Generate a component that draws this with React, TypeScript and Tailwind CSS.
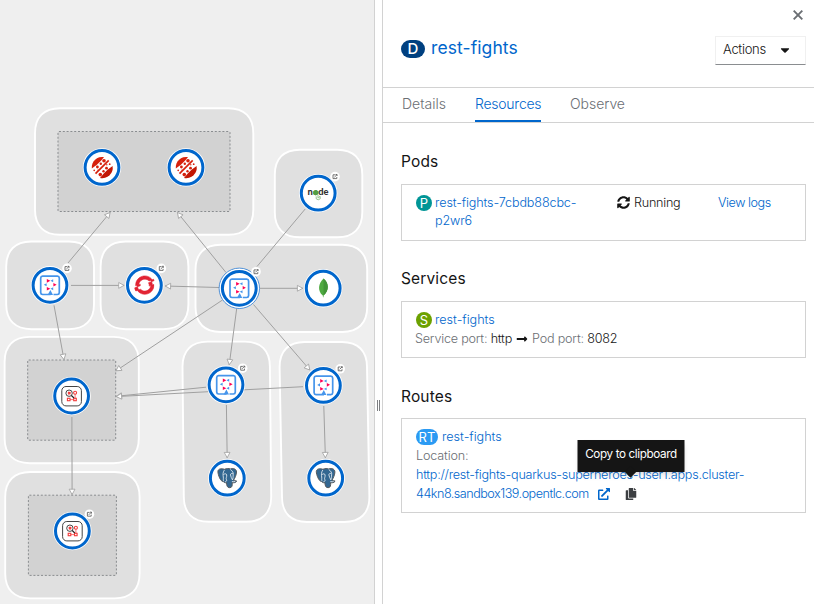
import React from "react";
import { FaSyncAlt, FaExternalLinkAlt, FaCopy, FaCaretDown, FaLongArrowAltRight } from "react-icons/fa";
import { SiRedhatopenshift } from "react-icons/si";

const LINE = "#a0a0a0";

type Pt = { x: number; y: number };

function Group({ x1, y1, x2, y2, skew = 0 }: { x1: number; y1: number; x2: number; y2: number; skew?: number }) {
  const r = 25;
  const d = `M${x1 + r} ${y1}H${x2 - r}C${x2 - 9} ${y1} ${x2} ${y1 + 9} ${x2} ${y1 + r}L${x2 + skew} ${y2 - r}C${x2 + skew} ${y2 - 9} ${x2 - 9 + skew} ${y2} ${x2 - r + skew} ${y2}H${x1 + r + skew}C${x1 + 9 + skew} ${y2} ${x1 + skew} ${y2 - 9} ${x1 + skew} ${y2 - r}L${x1} ${y1 + r}C${x1} ${y1 + 9} ${x1 + 9} ${y1} ${x1 + r} ${y1}Z`;
  return <path d={d} fill="#e0e0e0" stroke="#fff" strokeWidth="1.9" />;
}

function Inner({ x, y, w, h }: { x: number; y: number; w: number; h: number }) {
  return <rect x={x} y={y} width={w} height={h} rx="1" fill="#d2d2d2" stroke="#8a8d90" strokeWidth="1" strokeDasharray="2 1.8" />;
}

function Edge({ x1, y1, x2, y2, arrow = true }: { x1: number; y1: number; x2: number; y2: number; arrow?: boolean }) {
  const a = (Math.atan2(y2 - y1, x2 - x1) * 180) / Math.PI;
  return (
    <g stroke={LINE} strokeWidth="1">
      <line x1={x1} y1={y1} x2={x2} y2={y2} />
      {arrow && <path d="M-5.6 -2.9L-0.3 0L-5.6 2.9Z" fill="#fff" strokeWidth="0.8" transform={`translate(${x2} ${y2}) rotate(${a})`} />}
    </g>
  );
}

function Node({ x, y, selected, children }: Pt & { selected?: boolean; children: React.ReactNode }) {
  return (
    <g transform={`translate(${x} ${y})`}>
      {selected && <circle r="20.2" fill="#fff" stroke="#3d86d4" strokeWidth="0.9" />}
      <circle r="19.2" fill="#fff" />
      <circle r="16.9" fill="#fff" stroke="#06c" strokeWidth="3" />
      {children}
    </g>
  );
}

function Decorator({ x, y }: Pt) {
  return (
    <g transform={`translate(${x} ${y})`}>
      <circle r="4.8" fill="#fff" />
      <path d="M0.2 -1.8H-2V2H1.8V0.4M-0.6 0.6L2 -2M0.6 -2.1H2.1V-0.6" fill="none" stroke="#555" strokeWidth="0.8" />
    </g>
  );
}

function Quarkus() {
  return (
    <g>
      <path d="M3.5 9.2H7.4A2 2 0 0 0 9.3 7.3V-7.3A2 2 0 0 0 7.4 -9.2H-7.4A2 2 0 0 0 -9.3 -7.3V7.3A2 2 0 0 0 -7.4 9.2H0.6" fill="none" stroke="#4695eb" strokeWidth="1.7" />
      <path d="M0.4 4.7L3 9.6H-2.4Z" fill="#4695eb" />
      <g fill="#f05">
        <path d="M-3.2 -6.3L0.3 -4.5L-3.2 -2.6Z" />
        <path d="M3.4 -2.4L6.6 -0.6L3.4 1.3Z" />
        <path d="M-3.2 1.7L0.3 3.5L-3.2 5.2Z" />
      </g>
      <g fill="#4695eb">
        <path d="M3.2 -6L0.5 -4.5L3.2 -3Z" />
        <path d="M-3.4 -2.1L-6.2 -0.5L-3.4 1Z" />
        <path d="M3.2 2L0.5 3.5L3.2 4.9Z" />
      </g>
    </g>
  );
}

function Strimzi() {
  return (
    <g>
      <path d="M-10.2 1A10.4 10.4 0 0 1 2 -10.3L-0.3 -7.4L-5.1 -2.6Z" fill="#d6200c" />
      <path d="M10.6 -1.5A10.4 10.4 0 0 1 -2 10.5L1.5 6.4L5.8 2.2Z" fill="#c21704" />
      <path d="M-6.5 6.2L6.7 -7" stroke="#d6200c" strokeWidth="1.7" />
      <g fill="#d6200c">
        <circle cx="2" cy="-6.7" r="1.8" />
        <circle cx="-1.2" cy="-3.7" r="1.2" />
        <circle cx="-4.6" cy="-0.4" r="1.4" />
        <circle cx="-7.8" cy="3" r="0.8" />
        <circle cx="-4" cy="2.6" r="0.6" />
        <circle cx="-1.7" cy="7.2" r="1.8" />
        <circle cx="1.5" cy="3.8" r="1.2" />
        <circle cx="4.5" cy="0.8" r="1.4" />
        <circle cx="4.8" cy="-2.7" r="0.7" />
        <circle cx="7.7" cy="-3.2" r="0.9" />
      </g>
    </g>
  );
}

function NodeJs() {
  return (
    <g>
      <text x="-10.6" y="2" fontFamily="Lato, sans-serif" fontWeight="900" fontSize="9.2" fill="#333" textLength="21" lengthAdjust="spacingAndGlyphs">
        n<tspan fill="#539e43">o</tspan>de
      </text>
      <path d="M-2.5 -3.2L0 -1.8V1L-2.5 2.4L-5 1V-1.8Z" fill="#539e43" />
      <path d="M-0.2 1.8V4.8M-2 3.2V5.6L0 6.6L2 5.6V3.2M1.7 2.9L0.1 5.1" fill="none" stroke="#7db673" strokeWidth="0.8" />
    </g>
  );
}

function Leaf() {
  return (
    <g>
      <path d="M0.3 -9.8C5.8 -5.2 6.3 2 0.4 7.2L0.3 9H-0.2L-0.4 7.2C-6 2.5 -4.8 -4.8 0.3 -9.8Z" fill="#4faa41" />
      <path d="M0.3 -9.8C5.8 -5.2 6.3 2 0.4 7.2Z" fill="#429538" />
    </g>
  );
}

function Elephant() {
  return (
    <g>
      <path
        d="M-9.4 -6.6C-9.4 -9.6 -5.4 -10 -2.8 -8.9C-0.5 -9.9 1.4 -9.8 3 -9.2C5.6 -10.4 9.2 -9.4 9.2 -6.2C9.2 -3.4 7.4 0.3 6.2 2.1C7.4 2.7 8.6 2.2 9.4 3C8.4 4.6 6 4.8 4.9 4.4C5.1 7 5 9.5 2.4 9.5C-0.1 9.5 -0.6 7.4 -0.8 4.5C-2 4.7 -3.4 4.4 -4.1 3.3C-6.8 3.5 -9.3 -3.4 -9.4 -6.6Z"
        fill="#336791"
        stroke="#55595c"
        strokeWidth="1"
      />
      <path
        d="M-2.9 -8.2C-4.6 -5.8 -4.4 -3.4 -4 -1.2C-3.7 0.8 -4.4 1.6 -3.6 2.9M-3.8 -3.6C-2.4 -4.8 -0.8 -4.6 -0.6 -3.2C-0.3 -1.2 -1.8 0.2 -0.8 1.6C-0.3 2.4 -1 3.6 -2.4 3.6M3 -8.7C5.2 -7.2 6.4 -5.4 5.9 -3.4C5.6 -1.4 6.2 0 4.9 1.7M5.6 -4.4C4.4 -5.2 3 -4.6 3.2 -3.2C3.4 -1.4 4.6 0.4 5.2 1.6M4.6 3.4C6 3.6 7.2 3.5 8 3.2"
        fill="none"
        stroke="#fff"
        strokeWidth="0.75"
      />
    </g>
  );
}

function Apicurio() {
  return (
    <g>
      <rect x="-9.8" y="-9.5" width="19.6" height="19.4" rx="4.2" fill="#fff" stroke="#444" strokeWidth="1" />
      <g fill="none" stroke="#f33b3b" strokeWidth="1.1">
        <rect x="-4.2" y="2.3" width="2.6" height="2.4" />
        <rect x="2.1" y="2.3" width="2.6" height="2.4" />
        <circle cx="3.5" cy="-3.3" r="1.5" />
        <path d="M-1.6 3.6H2.1M3.5 -1.8V2.2" strokeWidth="0.7" />
        <path d="M-3.5 -4L-1.2 -1.7M-1.2 -4L-3.5 -1.7" strokeWidth="1.4" />
      </g>
      <circle cx="-2.5" cy="-2.8" r="3.2" fill="none" stroke="#333" strokeWidth="0.9" />
      <path d="M-0.2 -0.5L2.4 2" stroke="#222" strokeWidth="1.1" />
    </g>
  );
}

function OpenShift() {
  return (
    <g>
      <SiRedhatopenshift x={-10} y={-10.2} size={20} color="#e22434" strokeWidth={0.7} />
    </g>
  );
}

function Topology() {
  return (
    <svg width="374" height="604" viewBox="0 0 374 604" className="block">
      <Group x1={35} y1={108.2} x2={253.3} y2={234.8} />
      <Group x1={274.8} y1={149.7} x2={362.3} y2={237.3} />
      <Group x1={6.2} y1={241.5} x2={94} y2={329.2} />
      <Group x1={100.6} y1={241.5} x2={188.4} y2={329.2} />
      <Group x1={195.5} y1={244.8} x2={367.2} y2={332} />
      <Group x1={4.6} y1={336.9} x2={138.8} y2={463.2} />
      <Group x1={5.2} y1={472} x2={139.6} y2={598.4} />
      <Group x1={182.5} y1={341.6} x2={269.9} y2={521.8} skew={1.3} />
      <Group x1={279.6} y1={342} x2={367} y2={522} skew={2.4} />
      <Inner x={58} y={131.5} w={172} h={80} />
      <Inner x={27.7} y={360} w={88} h={80.2} />
      <Inner x={28.4} y={495.2} w={88} h={80.2} />

      <Edge x1={68} y1={263} x2={110.3} y2={212.3} />
      <Edge x1={226} y1={272.5} x2={177.3} y2={212.3} />
      <Edge x1={257} y1={266.5} x2={305.2} y2={209} arrow={false} />
      <Edge x1={260} y1={288.3} x2={303} y2={288.3} />
      <Edge x1={219} y1={287.5} x2={165} y2={286} />
      <Edge x1={71} y1={285.4} x2={124.3} y2={285.4} />
      <Edge x1={54} y1={305.3} x2={64} y2={359.8} />
      <Edge x1={222.5} y1={300} x2={115.7} y2={371} />
      <Edge x1={236.7} y1={308.5} x2={229.2} y2={365} />
      <Edge x1={253.5} y1={304.5} x2={310} y2={370.2} />
      <Edge x1={206} y1={387.2} x2={116} y2={396.3} />
      <Edge x1={303} y1={386.7} x2={116} y2={396.6} />
      <Edge x1={226.4} y1={405} x2={227.2} y2={458} />
      <Edge x1={323.8} y1={406} x2={325.4} y2={458} />
      <Edge x1={71.9} y1={417} x2={72.1} y2={494.8} />

      <Node x={102} y={167.4}><Strimzi /></Node>
      <Node x={186} y={167.4}><Strimzi /></Node>
      <Node x={318.2} y={193.2}><NodeJs /></Node>
      <Node x={239.3} y={288.3} selected><Quarkus /></Node>
      <Node x={323.2} y={288.2}><Leaf /></Node>
      <Node x={50} y={285.3}><Quarkus /></Node>
      <Node x={144.4} y={285.3}><OpenShift /></Node>
      <Node x={71.6} y={396}><Apicurio /></Node>
      <Node x={72.4} y={531}><Apicurio /></Node>
      <Node x={226} y={384.8}><Quarkus /></Node>
      <Node x={323.4} y={385.4}><Quarkus /></Node>
      <Node x={227.3} y={478.2}><Elephant /></Node>
      <Node x={325.7} y={478.2}><Elephant /></Node>

      <Decorator x={335} y={176.6} />
      <Decorator x={256} y={271.7} />
      <Decorator x={67} y={268.4} />
      <Decorator x={161.3} y={268.4} />
      <Decorator x={242.7} y={368.2} />
      <Decorator x={340.2} y={368.8} />
      <Decorator x={89.4} y={514.2} />
    </svg>
  );
}

function Heading({ children }: { children: React.ReactNode }) {
  return <h2 className="h-5 text-[15.5px] leading-5 tracking-[0.15px] text-[#151515]">{children}</h2>;
}

function Badge({ className, children }: { className: string; children: React.ReactNode }) {
  return <span className={`flex h-4 shrink-0 items-center justify-center rounded-full text-[13px] leading-4 font-normal text-white ${className}`}>{children}</span>;
}

export default function App() {
  return (
    <div className="flex h-[604px] w-[814px] overflow-hidden bg-white font-['Inter',sans-serif] font-light text-[#151515]">
      <div className="w-[374px] shrink-0 bg-[#efefef]">
        <Topology />
      </div>
      <div className="flex w-[9px] shrink-0 items-center justify-center gap-px border-x border-[#d2d2d2] pt-[206px]">
        <span className="h-[11px] w-px bg-[#7d7f82]" />
        <span className="h-[11px] w-px bg-[#7d7f82]" />
      </div>

      <aside className="flex min-w-0 flex-1 flex-col">
        <header className="flex h-[88px] flex-col border-b border-[#d2d2d2]">
          <div className="flex h-[30px] justify-end pt-[10px] pr-[11px]">
            <svg width="10" height="10" viewBox="0 0 10 10">
              <path d="M0.7 0.7L9.3 9.3M9.3 0.7L0.7 9.3" stroke="#6a6e73" strokeWidth="1.9" />
            </svg>
          </div>
          <div className="flex items-start justify-between pr-2 pl-[18px]">
            <div className="flex pt-[7px]">
              <span className="mt-[3px] flex h-[18px] w-6 items-center justify-center rounded-full bg-[#004080] text-[15px] font-medium text-white">D</span>
              <h1 className="ml-1.5 text-[17.5px] leading-[22px] font-normal tracking-[0.1px] text-[#06c]">rest-fights</h1>
            </div>
            <button className="mt-1.5 flex h-[29px] w-[91px] items-center justify-between border border-[#f0f0f0] border-b-[#8a8d90] pr-[13px] pb-0.5 pl-[7px] text-[13px] font-light">
              <span className="tracking-[-0.3px]">Actions</span>
              <FaCaretDown size={14} />
            </button>
          </div>
        </header>

        <nav className="flex h-[35px] gap-[29px] border-b border-[#d2d2d2] pl-[19px] text-[14px] leading-[32px] text-[#6a6e73]">
          <span className="w-11 whitespace-nowrap">Details</span>
          <span className="w-[66px] border-b-2 border-[#06c] tracking-[-0.25px] whitespace-nowrap text-[#06c]">Resources</span>
          <span className="tracking-[-0.05px] whitespace-nowrap">Observe</span>
        </nav>

        <main className="flex flex-col pr-2 pl-[18px] text-[12.6px] leading-[18.9px]">
          <div className="pt-[29px] pb-3 font-normal"><Heading>Pods</Heading></div>
          <section className="flex h-[57px] border border-[#d2d2d2] pt-[9px] pl-[14px] leading-[18px]">
            <Badge className="mt-px w-4 bg-[#009596]">P</Badge>
            <a className="ml-[3px] w-[182px] tracking-[-0.12px] text-[#06c]">rest-fights-7cbdb88cbc-<br />p2wr6</a>
            <div className="flex w-[101px] tracking-[-0.25px]">
              <FaSyncAlt size={13} className="mt-[2px] mr-1" />
              <span>Running</span>
            </div>
            <a className="tracking-[-0.45px] text-[#06c]">View logs</a>
          </section>

          <div className="pt-7 pb-3 font-normal"><Heading>Services</Heading></div>
          <section className="flex h-[57px] flex-col border border-[#d2d2d2] pt-[9px] pl-[14px]">
            <div className="flex">
              <Badge className="mt-px mr-[3px] w-4 bg-[#6ca100]">S</Badge>
              <a className="text-[#06c]">rest-fights</a>
            </div>
            <div className="-ml-px flex items-center gap-1 tracking-[-0.2px] text-[#6a6e73]">
              <span>Service port: <span className="text-[#151515]">http</span></span>
              <FaLongArrowAltRight size={12} color="#151515" />
              <span>Pod port: <span className="text-[#151515]">8082</span></span>
            </div>
          </section>

          <div className="pt-[29px] pb-[11px] font-normal"><Heading>Routes</Heading></div>
          <section className="flex h-[95px] flex-col border border-[#d2d2d2] pt-[9px] pl-[14px]">
            <div className="flex">
              <Badge className="mt-px mr-1 w-[22px] bg-[#2b9af3]">RT</Badge>
              <a className="text-[#06c]">rest-fights</a>
            </div>
            <span className="tracking-[-0.15px] text-[#6a6e73]">Location:</span>
            <a className="tracking-[-0.26px] whitespace-nowrap text-[#06c]">http://rest-fights-quarkus-superheroes-user1.apps.cluster-</a>
            <div className="flex">
              <a className="w-[182px] tracking-[-0.5px] whitespace-nowrap text-[#06c]">44kn8.sandbox139.opentlc.com</a>
              <FaExternalLinkAlt size={12} color="#06c" className="mt-[3px]" />
              <div className="relative ml-[15px] pt-[3px]">
                <FaCopy size={12} color="#3c3f42" />
                <div className="absolute -top-[45px] left-[6px] flex h-8 w-[107px] -translate-x-1/2 items-center justify-center bg-[#151515] pb-0.5 text-[11.7px] font-normal tracking-[-0.38px] whitespace-nowrap text-white shadow-md">
                  Copy to clipboard
                  <span className="absolute -bottom-1 left-[49px] h-2 w-2 rotate-45 bg-[#151515]" />
                </div>
              </div>
            </div>
          </section>
        </main>
      </aside>
    </div>
  );
}
